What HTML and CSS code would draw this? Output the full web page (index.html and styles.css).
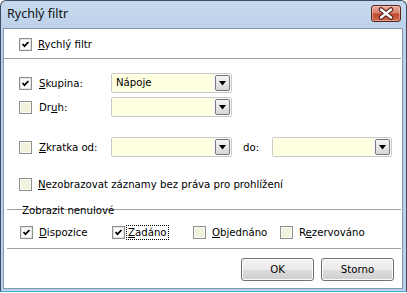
FILE: index.html
```html
<!DOCTYPE html>
<html lang="cs">
<head>
    <meta charset="UTF-8">
    <meta name="viewport" content="width=device-width, initial-scale=1.0">
    <title>Rychlý filtr</title>
    <link rel="stylesheet" href="styles.css">
</head>
<body>
    <div class="window">
        <div class="titlebar">
            <span class="title">Rychlý filtr</span>
            <span class="close-btn">
                <svg width="30" height="17" viewBox="0 0 30 17">
                    <path d="M10 4.5 L20 12.5 M20 4.5 L10 12.5" stroke="#4e1a12" stroke-width="4.6" stroke-linecap="round"/>
                    <path d="M10 4.5 L20 12.5 M20 4.5 L10 12.5" stroke="#ffffff" stroke-width="2.4" stroke-linecap="round"/>
                </svg>
            </span>
        </div>

        <div class="client">
            <label class="check filter-head">
                <span class="cb checked"><svg viewBox="0 0 11 11"><polyline points="2.5,5 4.5,7.2 8.5,3"/></svg></span>
                <span><u>R</u>ychlý filtr</span>
            </label>
            <div class="sep"></div>

            <!-- Filter fields -->
            <div class="field-row first">
                <span class="cb checked"><svg viewBox="0 0 11 11"><polyline points="2.5,5 4.5,7.2 8.5,3"/></svg></span>
                <span class="field-label"><u>S</u>kupina:</span>
                <div class="combo">
                    <span class="combo-text">Nápoje</span>
                    <span class="combo-btn"><svg viewBox="0 0 13 14"><polygon points="3,5 10,5 6.5,9.5"/></svg></span>
                </div>
            </div>
            <div class="field-row">
                <span class="cb"></span>
                <span class="field-label">Dr<u>u</u>h:</span>
                <div class="combo">
                    <span class="combo-text"></span>
                    <span class="combo-btn"><svg viewBox="0 0 13 14"><polygon points="3,5 10,5 6.5,9.5"/></svg></span>
                </div>
            </div>
            <div class="field-row spaced">
                <span class="cb"></span>
                <span class="field-label"><u>Z</u>kratka od:</span>
                <div class="combo">
                    <span class="combo-text"></span>
                    <span class="combo-btn"><svg viewBox="0 0 13 14"><polygon points="3,5 10,5 6.5,9.5"/></svg></span>
                </div>
                <span class="to-label">do:</span>
                <div class="combo narrow">
                    <span class="combo-text"></span>
                    <span class="combo-btn"><svg viewBox="0 0 13 14"><polygon points="3,5 10,5 6.5,9.5"/></svg></span>
                </div>
            </div>

            <label class="check no-rights">
                <span class="cb"></span>
                <span><u>N</u>ezobrazovat záznamy bez práva pro prohlížení</span>
            </label>

            <!-- Zobrazit nenulove -->
            <div class="group">
                <span class="group-caption">Zobrazit nenulové</span>
                <label class="check">
                    <span class="cb checked"><svg viewBox="0 0 11 11"><polyline points="2.5,5 4.5,7.2 8.5,3"/></svg></span>
                    <span><u>D</u>ispozice</span>
                </label>
                <label class="check focused">
                    <span class="cb checked"><svg viewBox="0 0 11 11"><polyline points="2.5,5 4.5,7.2 8.5,3"/></svg></span>
                    <span class="focus"><u>Z</u>adáno</span>
                </label>
                <label class="check">
                    <span class="cb"></span>
                    <span><u>O</u>bjednáno</span>
                </label>
                <label class="check">
                    <span class="cb"></span>
                    <span>R<u>e</u>zervováno</span>
                </label>
            </div>

            <div class="buttons">
                <button type="button">OK</button>
                <button type="button">Storno</button>
            </div>
        </div>
    </div>
</body>
</html>
```

FILE: styles.css
```css
body {
    margin: 0;
    font-family: "DejaVu Sans Condensed", "DejaVu Sans", sans-serif;
    font-stretch: condensed;
    font-size: 11.3px;
    color: #000;
    background: #fff;
}
.window {
    width: 407px;
    height: 292px;
    box-sizing: border-box;
    display: flex;
    flex-direction: column;
    background: linear-gradient(#c6d9ee, #b9d0ea 40px, #b9d0ea);
    border: 1px solid #3d4d63;
    border-bottom: 1px solid #3fb2d6;
    border-radius: 6px 6px 0 0;
    padding: 0 3px 2px 2px;
}
.titlebar {
    height: 27px;
    display: flex;
    justify-content: space-between;
    align-items: flex-start;
}
.title {
    font-family: "Noto Sans", "Open Sans", sans-serif;
    font-size: 12.5px;
    line-height: 16px;
    padding: 5px 0 0 4px;
    color: #111;
}
.close-btn {
    width: 30px;
    height: 17px;
    margin: 4px 2px 0 0;
    box-sizing: border-box;
    border: 1px solid #5e2418;
    border-radius: 3px;
    background: linear-gradient(#e8a899 0%, #d8826f 45%, #c3472f 55%, #cf6c50 100%);
    box-shadow: inset 0 0 0 1px rgba(255, 255, 255, 0.35);
    display: flex;
    align-items: center;
    justify-content: center;
}
.close-btn svg {
    display: block;
    margin: -1px;
}
.client {
    flex: 1;
    background: #fff;
    border: 1px solid #8496b0;
    display: flex;
    flex-direction: column;
}
u {
    text-underline-offset: 1px;
}

/* checkboxes */
.check {
    display: flex;
    align-items: center;
    gap: 6px;
    height: 13px;
    white-space: nowrap;
}
.cb {
    width: 13px;
    height: 13px;
    flex: none;
    box-sizing: border-box;
    border: 1px solid #8e8f8f;
    background: #f1f1de;
    box-shadow: inset 0 0 0 1px #fbfbf2;
    display: flex;
}
.cb.checked {
    background: #fcfcfc;
    box-shadow: inset 0 0 0 1px #e4e4e4;
}
.cb svg {
    width: 11px;
    height: 11px;
}
.cb polyline {
    fill: none;
    stroke: #000;
    stroke-width: 1.7;
}
.filter-head {
    margin: 9px 0 0 15px;
}
.sep {
    margin: 7px 1px 0 0;
    border-top: 1px solid #a0a0a0;
}

/* field rows */
.field-row {
    display: flex;
    align-items: center;
    height: 20px;
    padding-left: 15px;
    margin-top: 4px;
}
.field-row.first {
    margin-top: 14px;
}
.field-row.spaced {
    margin-top: 20px;
}
.field-label {
    width: 72px;
    margin-left: 7px;
    white-space: nowrap;
}
.combo {
    width: 121px;
    height: 20px;
    box-sizing: border-box;
    border: 1px solid #cacaca;
    border-radius: 2px;
    background: #f7f7f7;
    display: flex;
}
.combo.narrow {
    width: 120px;
}
.combo-text {
    flex: 1;
    background: #ffffe1;
    padding-left: 4px;
    line-height: 18px;
}
.combo-btn {
    width: 15px;
    height: 16px;
    box-sizing: border-box;
    margin: 1px 1px 1px 2px;
    border: 1px solid #7a7a7a;
    border-radius: 2px;
    background: linear-gradient(#f6f6f6, #e6e6e6 50%, #d6d6d6);
}
.combo-btn svg {
    display: block;
    width: 13px;
    height: 14px;
}
.to-label {
    width: 29px;
    margin-left: 11px;
}
.no-rights {
    margin: 21px 0 0 15px;
}

/* group box */
.group {
    position: relative;
    margin: 18px 1px 0 3px;
    padding: 16px 0 9px 13px;
    border-top: 1px solid #a0a0a0;
    border-bottom: 1px solid #a0a0a0;
    display: grid;
    grid-template-columns: 92px 81px 87px auto;
}
.group-caption {
    position: absolute;
    left: 15px;
    top: -6px;
    line-height: 14px;
}
.focused {
    gap: 2px;
}
.focus {
    outline: 1px dotted #000;
    padding: 0 1px;
    line-height: 13px;
}

/* buttons */
.buttons {
    display: flex;
    justify-content: flex-end;
    gap: 7px;
    margin-top: 9px;
    padding-right: 8px;
}
.buttons button {
    width: 73px;
    height: 23px;
    font: inherit;
    color: #000;
    border: 1px solid #707070;
    border-radius: 3px;
    background: linear-gradient(#f2f2f2 0%, #ebebeb 50%, #dddddd 50%, #cfcfcf 100%);
    box-shadow: inset 0 0 0 1px #fbfbfb;
    padding: 0;
}
```
